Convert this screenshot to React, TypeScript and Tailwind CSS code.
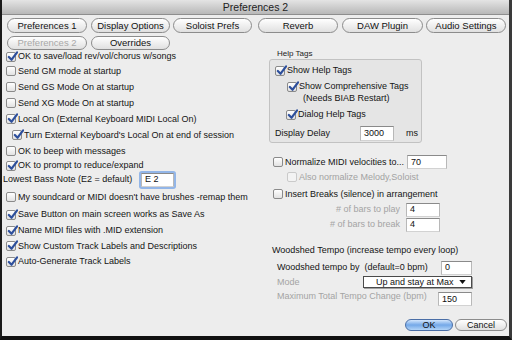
import type { ReactNode } from "react";

const FONT = { fontFamily: '"Liberation Sans", Arial, sans-serif' };

type CheckProps = {
  checked?: boolean;
  disabled?: boolean;
  children: ReactNode;
};

const Check = ({ checked = false, disabled = false, children }: CheckProps) => (
  <div className={`flex items-center gap-[2px] ${disabled ? "text-[#a2a2a2]" : "text-[#141414]"}`}>
    <span
      className={`relative h-[10px] w-[10px] shrink-0 rounded-[2px] border ${
        disabled ? "border-[#cacaca] bg-[#f3f3f3]" : "border-[#8a8a8a] bg-gradient-to-b from-white to-[#e2e2e2]"
      }`}
    >
      {checked ? (
        <svg viewBox="0 0 12 12" className="absolute -top-[2px] left-[0px] h-[11px] w-[11px]">
          <path d="M2 6.5 L5 9.5 L11 1.5" fill="none" stroke="#2d4f9c" strokeWidth="2.4" strokeLinecap="round" strokeLinejoin="round" />
        </svg>
      ) : null}
    </span>
    <span className="whitespace-nowrap">{children}</span>
  </div>
);

const PillButton = ({ label, width, disabled = false }: { label: string; width: string; disabled?: boolean }) => (
  <div
    className={`flex h-full items-center justify-center rounded-full border border-[#8c8c8c] bg-gradient-to-b from-white to-[#e0e0e0] text-[9.5px] ${width} ${
      disabled ? "text-[#a8a8a8]" : "text-[#111]"
    }`}
  >
    {label}
  </div>
);

const Field = ({ value, className = "" }: { value: string; className?: string }) => (
  <div
    className={`flex h-[14px] items-center border border-t-[#8a8a8a] border-x-[#b8b8b8] border-b-[#d2d2d2] bg-white px-[3px] text-[#111] ${className}`}
  >
    {value}
  </div>
);

const App = () => {
  return (
    <div
      style={FONT}
      className="flex h-[340px] w-[512px] flex-col overflow-hidden border-b-4 border-l-2 border-r-[3px] border-b-[#111] border-l-[#1a1a1a] border-r-[#3a3a3a] bg-[#ededed] text-[9px] leading-none"
    >
      <div className="flex h-[15px] shrink-0 items-center justify-center border-b border-[#8e8e8e] bg-gradient-to-b from-[#e4e4e4] to-[#b8b8b8] text-[10.5px] text-[#222]">
        Preferences 2
      </div>

      <div className="mt-[3px] flex h-[15px] shrink-0 items-stretch pl-[5px]">
        <PillButton label="Preferences 1" width="w-[80px]" />
        <div className="ml-[4px] flex">
          <PillButton label="Display Options" width="w-[79px]" />
        </div>
        <div className="ml-[3px] flex">
          <PillButton label="Soloist Prefs" width="w-[79px]" />
        </div>
        <div className="ml-[6px] flex">
          <PillButton label="Reverb" width="w-[80px]" />
        </div>
        <div className="ml-[4px] flex">
          <PillButton label="DAW Plugin" width="w-[81px]" />
        </div>
        <div className="ml-[3px] flex">
          <PillButton label="Audio Settings" width="w-[80px]" />
        </div>
      </div>
      <div className="mt-[3px] flex h-[14px] shrink-0 items-stretch pl-[5px]">
        <PillButton label="Preferences 2" width="w-[80px]" disabled />
        <div className="ml-[4px] flex">
          <PillButton label="Overrides" width="w-[79px]" />
        </div>
      </div>

      <div className="flex flex-1">
        <div className="flex w-[254px] shrink-0 flex-col pl-[4px]">
          <div className="flex h-[13px] items-center">
            <Check checked>OK to save/load rev/vol/chorus w/songs</Check>
          </div>
          <div className="flex h-[16px] items-center">
            <Check>Send GM mode at startup</Check>
          </div>
          <div className="flex h-[16px] items-center">
            <Check>Send GS Mode On at startup</Check>
          </div>
          <div className="flex h-[16px] items-center">
            <Check>Send XG Mode On at startup</Check>
          </div>
          <div className="flex h-[16px] items-center">
            <Check checked>Local On (External Keyboard MIDI Local On)</Check>
          </div>
          <div className="flex h-[16px] items-center pl-[6px]">
            <Check checked>Turn External Keyboard&apos;s Local On at end of session</Check>
          </div>
          <div className="flex h-[16px] items-center">
            <Check>OK to beep with messages</Check>
          </div>
          <div className="flex h-[13px] items-center">
            <Check checked>OK to prompt to reduce/expand</Check>
          </div>
          <div className="-ml-[3px] flex h-[15px] items-center text-[#141414]">
            <span className="w-[138px]">Lowest Bass Note (E2 = default)</span>
            <div className="rounded-[1px] shadow-[0_0_0_2px_#93b6e8]">
              <Field value="E 2" className="w-[33px]" />
            </div>
          </div>
          <div className="flex h-[20px] items-center">
            <Check>My soundcard or MIDI doesn&apos;t have brushes -remap them</Check>
          </div>
          <div className="flex h-[15.7px] items-center">
            <Check checked>Save Button on main screen works as Save As</Check>
          </div>
          <div className="flex h-[15.7px] items-center">
            <Check checked>Name MIDI files with .MID extension</Check>
          </div>
          <div className="flex h-[15.7px] items-center">
            <Check checked>Show Custom Track Labels and Descriptions</Check>
          </div>
          <div className="flex h-[15.7px] items-center">
            <Check checked>Auto-Generate Track Labels</Check>
          </div>
        </div>

        <div className="flex flex-1 flex-col">
          <div className="flex h-[8px] items-center pl-[21px] text-[8px] text-[#222]">Help Tags</div>
          <div className="ml-[13px] mt-[1px] flex h-[84px] w-[153px] flex-col rounded-[3px] border border-[#c2c2c2] bg-[#e5e5e5] pl-[5px]">
            <div className="mt-[4px] flex h-[13px] items-center">
              <Check checked>Show Help Tags</Check>
            </div>
            <div className="mt-[3px] flex h-[13px] items-center pl-[12px]">
              <Check checked>Show Comprehensive Tags</Check>
            </div>
            <div className="flex h-[10px] items-center pl-[28px] text-[#141414]">(Needs BIAB Restart)</div>
            <div className="mt-[5px] flex h-[13px] items-center pl-[11px]">
              <Check checked>Dialog Help Tags</Check>
            </div>
            <div className="mt-[4px] flex h-[16px] items-center text-[#141414]">
              <span className="w-[85px]">Display Delay</span>
              <Field value="3000" className="h-[15px] w-[34px]" />
              <span className="pl-[12px]">ms</span>
            </div>
          </div>

          <div className="mt-[12px] flex h-[14px] items-center pl-[17px]">
            <Check>Normalize MIDI velocities to...</Check>
            <Field value="70" className="ml-[3px] w-[40px]" />
          </div>
          <div className="flex h-[16px] items-center pl-[31px]">
            <Check disabled>Also normalize Melody,Soloist</Check>
          </div>
          <div className="mt-[1px] flex h-[16px] items-center pl-[17px]">
            <Check>Insert Breaks (silence) in arrangement</Check>
          </div>
          <div className="flex h-[15px] items-center">
            <span className="w-[150px] pr-[6px] text-right text-[#a4a4a4]"># of bars to play</span>
            <Field value="4" className="w-[34px]" />
          </div>
          <div className="flex h-[15px] items-center">
            <span className="w-[150px] pr-[6px] text-right text-[#a4a4a4]"># of bars to break</span>
            <Field value="4" className="w-[34px]" />
          </div>

          <div className="mt-[12px] flex h-[13px] items-center pl-[16px] text-[#141414]">
            Woodshed Tempo (increase tempo every loop)
          </div>
          <div className="mt-[3px] flex h-[15px] items-center pl-[21px] text-[#141414]">
            <span className="w-[164px] whitespace-pre">Woodshed tempo by  (default=0 bpm)</span>
            <Field value="0" className="w-[31px]" />
          </div>
          <div className="flex h-[14px] items-center pl-[21px] text-[#a4a4a4]">
            <span className="w-[86px]">Mode</span>
            <div className="flex h-[12px] w-[109px] items-center justify-between border border-[#4a4a4a] bg-white pl-[12px] pr-[5px] text-[#111] shadow-[1px_1px_0_#a0a0a0]">
              <span>Up and stay at Max</span>
              <svg viewBox="0 0 8 5" className="h-[4px] w-[7px]">
                <path d="M0 0 H8 L4 5 Z" fill="#111" />
              </svg>
            </div>
          </div>
          <div className="flex h-[18px] items-center pl-[21px] text-[#a4a4a4]">
            <span className="-mt-[3px] w-[161px] whitespace-nowrap">Maximum Total Tempo Change (bpm)</span>
            <Field value="150" className="mt-[2px] w-[34px]" />
          </div>

          <div className="mt-[12px] flex h-[12px] items-stretch justify-end gap-[2px] pr-[2px]">
            <div className="flex w-[48px] items-center justify-center rounded-full border border-[#4a6ea6] bg-gradient-to-b from-[#d3e6fc] via-[#74a8e8] to-[#b2d4f7] text-[#111]">
              OK
            </div>
            <div className="flex w-[52px] items-center justify-center rounded-full border border-[#8c8c8c] bg-gradient-to-b from-white to-[#e0e0e0] text-[#111]">
              Cancel
            </div>
          </div>
        </div>
      </div>
    </div>
  );
};

export default App;
